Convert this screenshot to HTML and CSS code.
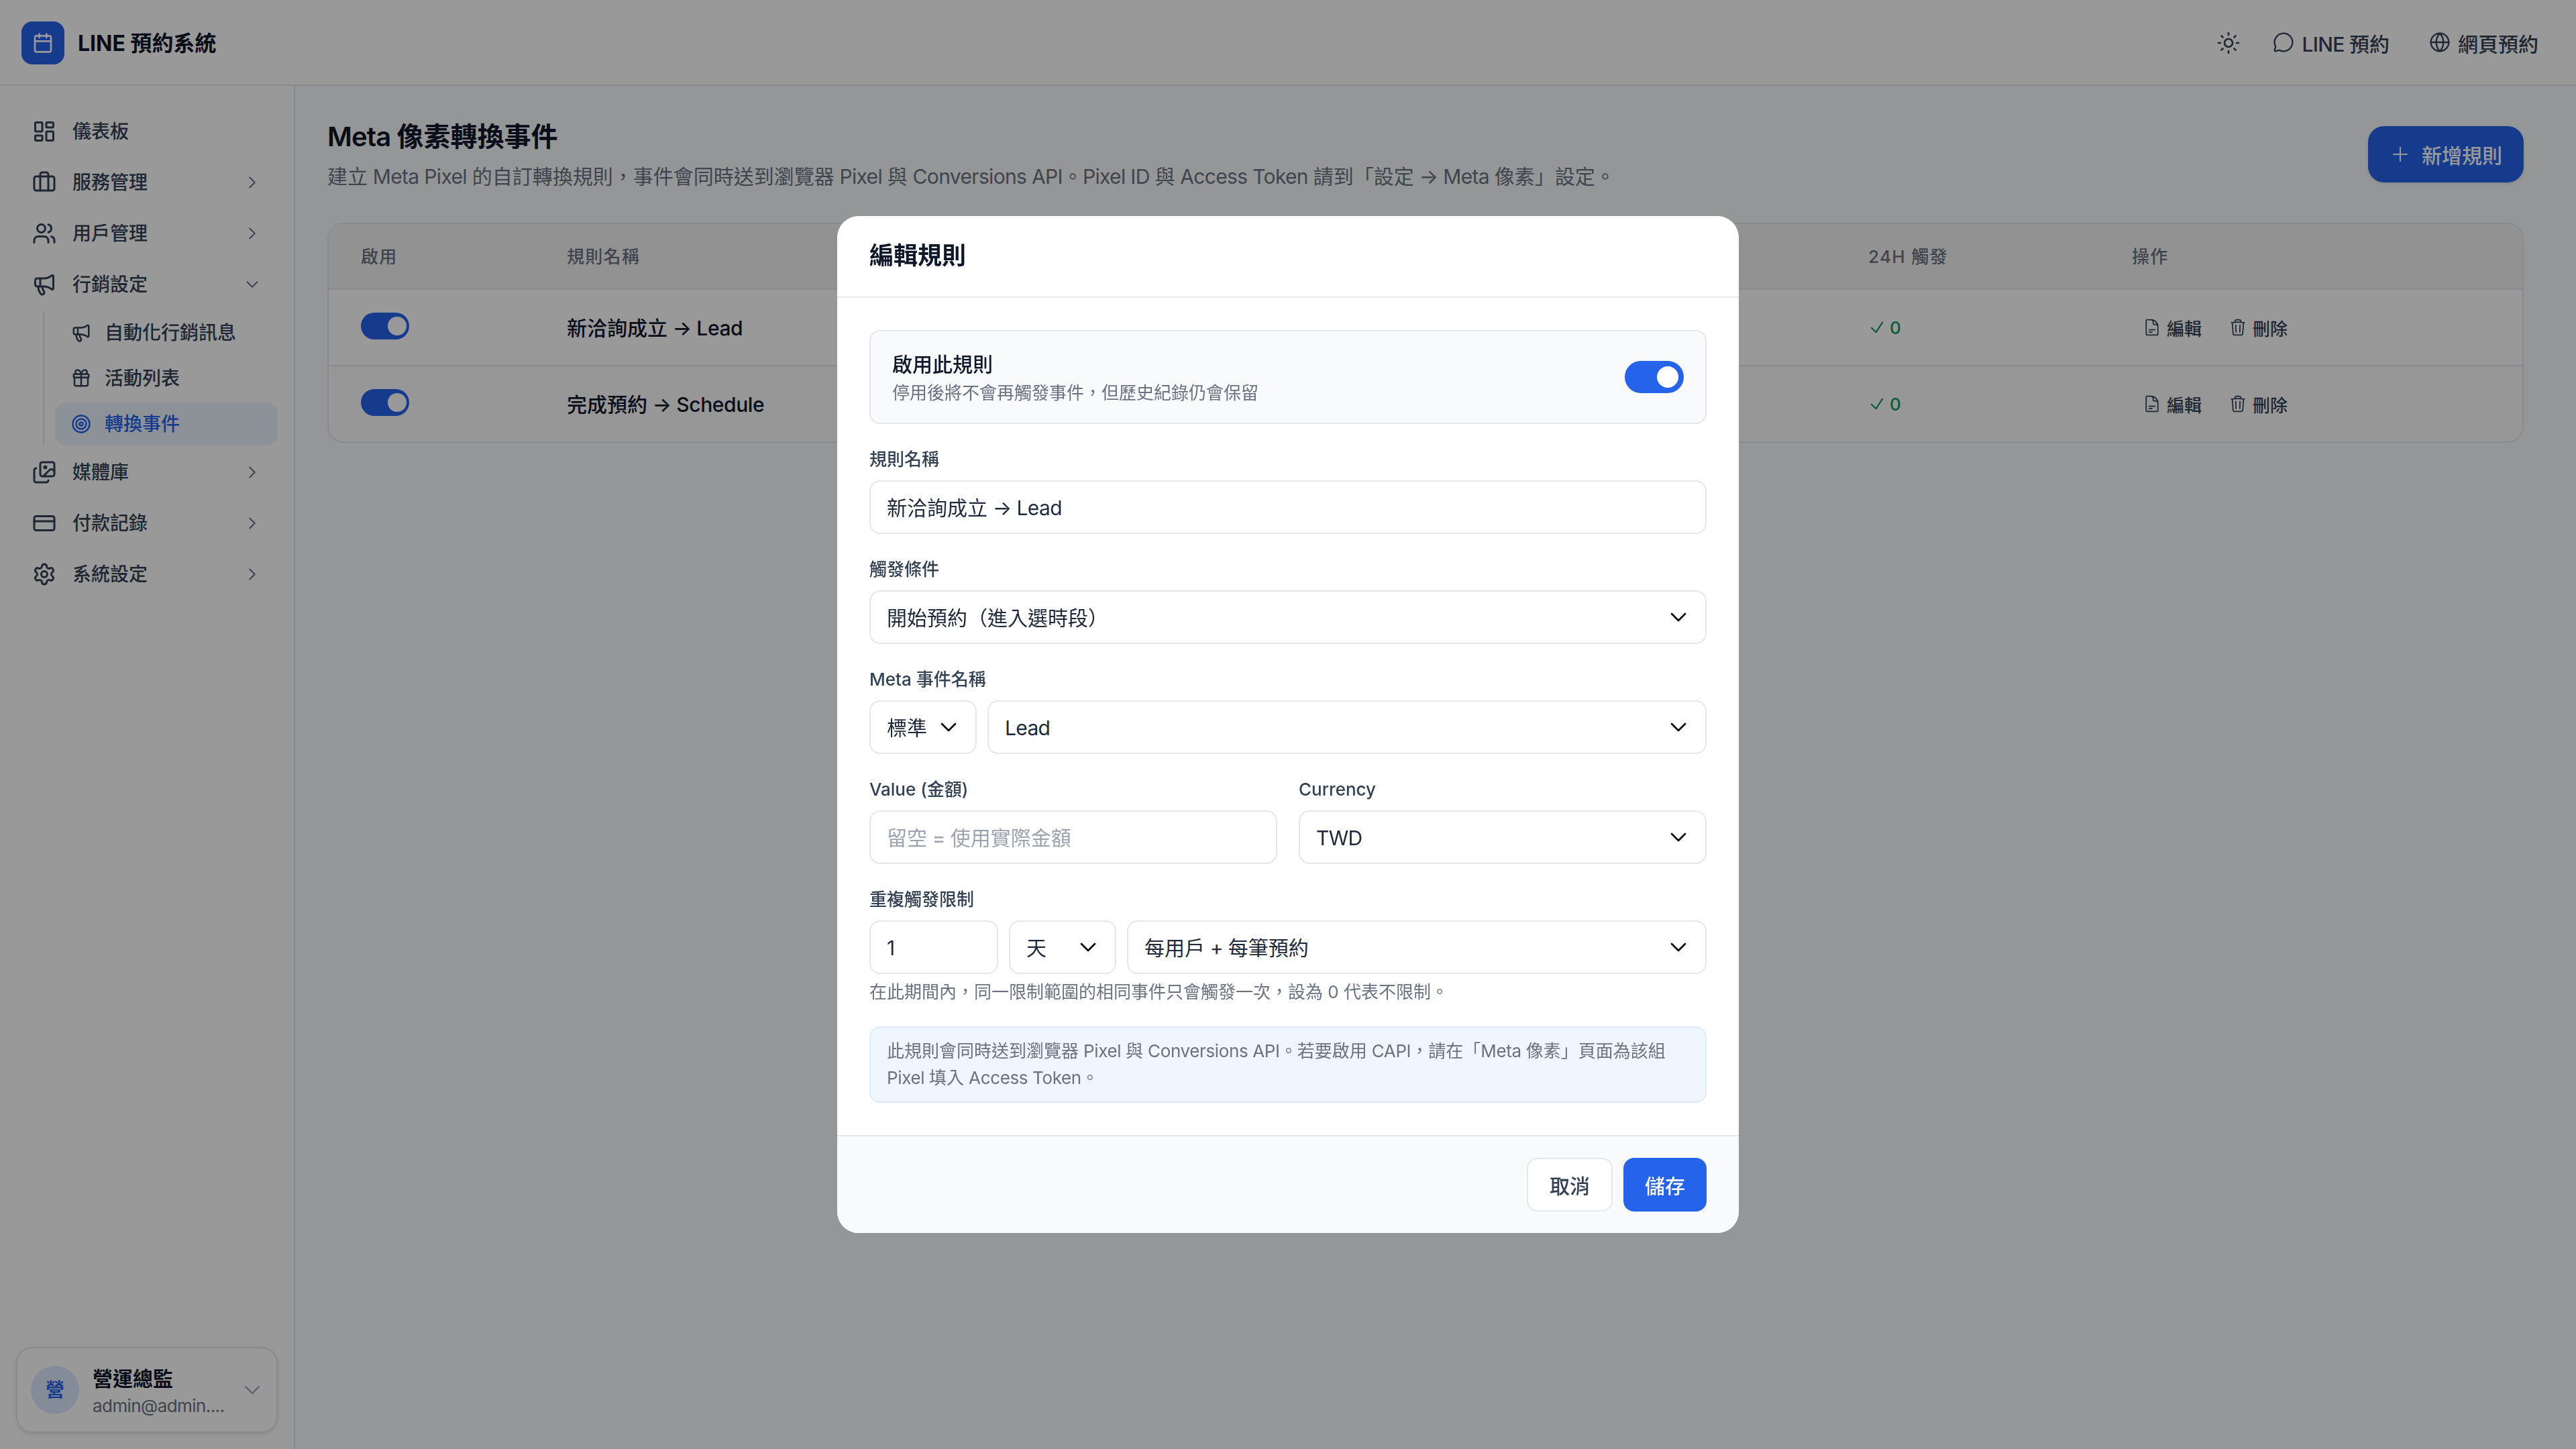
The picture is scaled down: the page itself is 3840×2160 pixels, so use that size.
FILE: index.html
```html
<!DOCTYPE html>
<html lang="zh-Hant">
<head>
    <meta charset="UTF-8">
    <meta name="viewport" content="width=device-width, initial-scale=1.0">
    <title>LINE 預約系統</title>
    <link rel="stylesheet" href="styles.css">
</head>
<body>
    <!-- Iconos compartidos -->
    <svg class="sprite" aria-hidden="true">
        <symbol id="i-right" viewBox="0 0 24 24"><path d="m8.25 4.5 7.5 7.5-7.5 7.5"/></symbol>
        <symbol id="i-down" viewBox="0 0 24 24"><path d="m19.5 8.25-7.5 7.5-7.5-7.5"/></symbol>
        <symbol id="i-check" viewBox="0 0 24 24"><path d="m4.5 12.75 6 6 9-13.5"/></symbol>
        <symbol id="i-megaphone" viewBox="0 0 24 24"><path d="M11 6a13 13 0 0 0 8.4-2.8A1 1 0 0 1 21 4v12a1 1 0 0 1-1.6.8A13 13 0 0 0 11 14H5a2 2 0 0 1-2-2V8a2 2 0 0 1 2-2z"/><path d="M6 14a12 12 0 0 0 2.4 7.2 2 2 0 0 0 3.2-2.4A8 8 0 0 1 10 14"/><path d="M8 6v8"/></symbol>
        <symbol id="i-doc" viewBox="0 0 24 24"><path d="M19.5 14.25v-2.625a3.375 3.375 0 0 0-3.375-3.375h-1.5A1.125 1.125 0 0 1 13.5 7.125v-1.5a3.375 3.375 0 0 0-3.375-3.375H8.25m0 12.75h7.5m-7.5 3H12M10.5 2.25H5.625c-.621 0-1.125.504-1.125 1.125v17.25c0 .621.504 1.125 1.125 1.125h12.75c.621 0 1.125-.504 1.125-1.125V11.25a9 9 0 0 0-9-9Z"/></symbol>
        <symbol id="i-trash" viewBox="0 0 24 24"><path d="m14.74 9-.346 9m-4.788 0L9.26 9m9.968-3.21c.342.052.682.107 1.022.166m-1.022-.165L18.16 19.673a2.25 2.25 0 0 1-2.244 2.077H8.084a2.25 2.25 0 0 1-2.244-2.077L4.772 5.79m14.456 0a48.108 48.108 0 0 0-3.478-.397m-12 .562c.34-.059.68-.114 1.022-.165m0 0a48.11 48.11 0 0 1 3.478-.397m7.5 0v-.916c0-1.18-.91-2.164-2.09-2.201a51.964 51.964 0 0 0-3.32 0c-1.18.037-2.09 1.022-2.09 2.201v.916m7.5 0a48.667 48.667 0 0 0-7.5 0"/></symbol>
    </svg>

    <div class="app">
        <header class="topbar">
            <div class="logo">
                <svg class="icon icon-32" viewBox="0 0 24 24"><path d="M8 2v4"/><path d="M16 2v4"/><rect width="18" height="18" x="3" y="4" rx="2"/><path d="M3 10h18"/></svg>
            </div>
            <h1 class="brand">LINE 預約系統</h1>
            <nav class="top-links">
                <button class="top-btn theme-btn">
                    <svg class="icon icon-36" viewBox="0 0 24 24"><circle cx="12" cy="12" r="4"/><path d="M12 2v2"/><path d="M12 20v2"/><path d="m4.93 4.93 1.41 1.41"/><path d="m17.66 17.66 1.41 1.41"/><path d="M2 12h2"/><path d="M20 12h2"/><path d="m6.34 17.66-1.41 1.41"/><path d="m19.07 4.93-1.41 1.41"/></svg>
                </button>
                <button class="top-btn line-btn">
                    <svg class="icon icon-32" viewBox="0 0 24 24"><path d="M2.992 16.342a2 2 0 0 1 .094 1.167l-1.065 3.29a1 1 0 0 0 1.236 1.168l3.413-.998a2 2 0 0 1 1.099.092 10 10 0 1 0-4.777-4.719"/></svg>
                    <span><span class="en">LINE </span>預約</span>
                </button>
                <button class="top-btn web-btn">
                    <svg class="icon icon-32" viewBox="0 0 24 24"><circle cx="12" cy="12" r="10"/><path d="M12 2a14.5 14.5 0 0 0 0 20 14.5 14.5 0 0 0 0-20"/><path d="M2 12h20"/></svg>
                    <span>網頁預約</span>
                </button>
            </nav>
        </header>

        <aside class="sidebar">
            <nav class="menu">
                <a class="menu-item">
                    <svg class="icon icon-36" viewBox="0 0 24 24"><rect width="7" height="9" x="3" y="3" rx="1"/><rect width="7" height="5" x="14" y="3" rx="1"/><rect width="7" height="9" x="14" y="12" rx="1"/><rect width="7" height="5" x="3" y="16" rx="1"/></svg>
                    <span>儀表板</span>
                </a>
                <a class="menu-item">
                    <svg class="icon icon-36" viewBox="0 0 24 24"><path d="M16 20V4a2 2 0 0 0-2-2h-4a2 2 0 0 0-2 2v16"/><rect width="20" height="14" x="2" y="6" rx="2"/></svg>
                    <span>服務管理</span>
                    <svg class="icon chevron"><use href="#i-right"/></svg>
                </a>
                <a class="menu-item">
                    <svg class="icon icon-36" viewBox="0 0 24 24"><path d="M16 21v-2a4 4 0 0 0-4-4H6a4 4 0 0 0-4 4v2"/><path d="M16 3.128a4 4 0 0 1 0 7.744"/><path d="M22 21v-2a4 4 0 0 0-3-3.87"/><circle cx="9" cy="7" r="4"/></svg>
                    <span>用戶管理</span>
                    <svg class="icon chevron"><use href="#i-right"/></svg>
                </a>
                <a class="menu-item">
                    <svg class="icon icon-36"><use href="#i-megaphone"/></svg>
                    <span>行銷設定</span>
                    <svg class="icon chevron"><use href="#i-down"/></svg>
                </a>
                <div class="submenu">
                    <a class="sub-item">
                        <svg class="icon icon-30"><use href="#i-megaphone"/></svg>
                        <span>自動化行銷訊息</span>
                    </a>
                    <a class="sub-item">
                        <svg class="icon icon-30" viewBox="0 0 24 24"><path d="M12 7v14"/><path d="M20 11v8a2 2 0 0 1-2 2H6a2 2 0 0 1-2-2v-8"/><path d="M7.5 7a1 1 0 0 1 0-5A4.8 8 0 0 1 12 7a4.8 8 0 0 1 4.5-5 1 1 0 0 1 0 5"/><rect x="3" y="7" width="18" height="4" rx="1"/></svg>
                        <span>活動列表</span>
                    </a>
                    <a class="sub-item active">
                        <svg class="icon icon-30" viewBox="0 0 24 24"><circle cx="12" cy="12" r="10"/><circle cx="12" cy="12" r="6"/><circle cx="12" cy="12" r="2"/></svg>
                        <span>轉換事件</span>
                    </a>
                </div>
                <a class="menu-item">
                    <svg class="icon icon-36" viewBox="0 0 24 24"><path d="m22 11-1.296-1.296a2.4 2.4 0 0 0-3.408 0L11 16"/><path d="M4 8a2 2 0 0 0-2 2v10a2 2 0 0 0 2 2h10a2 2 0 0 0 2-2"/><circle cx="13" cy="7" r="1" fill="currentColor"/><rect x="8" y="2" width="14" height="14" rx="2"/></svg>
                    <span>媒體庫</span>
                    <svg class="icon chevron"><use href="#i-right"/></svg>
                </a>
                <a class="menu-item">
                    <svg class="icon icon-36" viewBox="0 0 24 24"><rect width="20" height="14" x="2" y="5" rx="2"/><path d="M2 10h20"/></svg>
                    <span>付款記錄</span>
                    <svg class="icon chevron"><use href="#i-right"/></svg>
                </a>
                <a class="menu-item">
                    <svg class="icon icon-36" viewBox="0 0 24 24"><path d="M9.671 4.136a2.34 2.34 0 0 1 4.659 0 2.34 2.34 0 0 0 3.319 1.915 2.34 2.34 0 0 1 2.33 4.033 2.34 2.34 0 0 0 0 3.831 2.34 2.34 0 0 1-2.33 4.033 2.34 2.34 0 0 0-3.319 1.915 2.34 2.34 0 0 1-4.659 0 2.34 2.34 0 0 0-3.32-1.915 2.34 2.34 0 0 1-2.33-4.033 2.34 2.34 0 0 0 0-3.831A2.34 2.34 0 0 1 6.35 6.051a2.34 2.34 0 0 0 3.319-1.915"/><circle cx="12" cy="12" r="3"/></svg>
                    <span>系統設定</span>
                    <svg class="icon chevron"><use href="#i-right"/></svg>
                </a>
            </nav>
            <div class="user-card">
                <div class="avatar">營</div>
                <div class="user-info">
                    <div class="user-name">營運總監</div>
                    <div class="user-mail en">admin@admin....</div>
                </div>
                <svg class="icon user-chevron"><use href="#i-down"/></svg>
            </div>
        </aside>

        <main class="content">
            <div class="page-head">
                <div>
                    <h2 class="page-title"><span class="en">Meta </span>像素轉換事件</h2>
                    <p class="page-desc">建立<span class="en"> Meta Pixel </span>的自訂轉換規則，事件會同時送到瀏覽器<span class="en"> Pixel </span>與<span class="en"> Conversions API</span>。<span class="en">Pixel ID </span>與<span class="en"> Access Token </span>請到「設定<span class="en"> → Meta </span>像素」設定。</p>
                </div>
                <button class="add-btn">
                    <svg class="icon icon-32" viewBox="0 0 24 24"><path d="M12 4.5v15m7.5-7.5h-15"/></svg>
                    <span>新增規則</span>
                </button>
            </div>

            <div class="table">
                <div class="row row-head">
                    <div>啟用</div>
                    <div>規則名稱</div>
                    <div>24H 觸發</div>
                    <div>操作</div>
                </div>
                <div class="row">
                    <div><span class="switch"></span></div>
                    <div class="rule-name">新洽詢成立<span class="en"> → Lead</span></div>
                    <div class="count"><svg class="icon"><use href="#i-check"/></svg>0</div>
                    <div class="actions">
                        <button class="act-btn"><svg class="icon"><use href="#i-doc"/></svg>編輯</button>
                        <button class="act-btn"><svg class="icon"><use href="#i-trash"/></svg>刪除</button>
                    </div>
                </div>
                <div class="row">
                    <div><span class="switch"></span></div>
                    <div class="rule-name">完成預約<span class="en"> → Schedule</span></div>
                    <div class="count"><svg class="icon"><use href="#i-check"/></svg>0</div>
                    <div class="actions">
                        <button class="act-btn"><svg class="icon"><use href="#i-doc"/></svg>編輯</button>
                        <button class="act-btn"><svg class="icon"><use href="#i-trash"/></svg>刪除</button>
                    </div>
                </div>
            </div>
        </main>
    </div>

    <div class="overlay">
        <div class="modal">
            <div class="modal-head">編輯規則</div>
            <div class="modal-body">
                <div class="enable-card">
                    <div>
                        <div class="enable-title">啟用此規則</div>
                        <div class="enable-desc">停用後將不會再觸發事件，但歷史紀錄仍會保留</div>
                    </div>
                    <span class="switch switch-lg"></span>
                </div>

                <div class="field">
                    <label>規則名稱</label>
                    <div class="control"><span>新洽詢成立<span class="en"> → Lead</span></span></div>
                </div>

                <div class="field">
                    <label>觸發條件</label>
                    <div class="control select"><span>開始預約（進入選時段）</span><svg class="icon"><use href="#i-down"/></svg></div>
                </div>

                <div class="field">
                    <label>Meta 事件名稱</label>
                    <div class="inline">
                        <div class="control select w-160"><span>標準</span><svg class="icon"><use href="#i-down"/></svg></div>
                        <div class="control select grow"><span class="en">Lead</span><svg class="icon"><use href="#i-down"/></svg></div>
                    </div>
                </div>

                <div class="two-cols">
                    <div class="field">
                        <label>Value (金額)</label>
                        <div class="control placeholder"><span>留空<span class="en"> = </span>使用實際金額</span></div>
                    </div>
                    <div class="field">
                        <label>Currency</label>
                        <div class="control select"><span class="en">TWD</span><svg class="icon"><use href="#i-down"/></svg></div>
                    </div>
                </div>

                <div class="field">
                    <label>重複觸發限制</label>
                    <div class="inline">
                        <div class="control w-192"><span>1</span></div>
                        <div class="control select w-160"><span>天</span><svg class="icon"><use href="#i-down"/></svg></div>
                        <div class="control select grow"><span>每用戶<span class="en"> + </span>每筆預約</span><svg class="icon"><use href="#i-down"/></svg></div>
                    </div>
                    <p class="help">在此期間內，同一限制範圍的相同事件只會觸發一次，設為 0 代表不限制。</p>
                </div>

                <div class="notice">此規則會同時送到瀏覽器<span class="en"> Pixel </span>與<span class="en"> Conversions API</span>。若要啟用<span class="en"> CAPI</span>，請在「<span class="en">Meta </span>像素」頁面為該組<span class="en"> Pixel </span>填入<span class="en"> Access Token</span>。</div>
            </div>
            <div class="modal-foot">
                <button class="btn btn-cancel">取消</button>
                <button class="btn btn-save">儲存</button>
            </div>
        </div>
    </div>
</body>
</html>
```
FILE: styles.css
```css
* {
    box-sizing: border-box;
}

body {
    margin: 0;
    font-family: Inter, 'Noto Sans CJK TC', sans-serif;
    font-size: 30px;
    line-height: 1.5;
    color: #0f172a;
    background-color: #f8fafc;
}

h1, h2, p {
    margin: 0;
}

button {
    font-family: inherit;
    border: none;
    background: none;
    padding: 0;
    white-space: nowrap;
}

/* Texto latino un poco más cerrado */
.en {
    letter-spacing: -0.022em;
}

.sprite {
    display: none;
}

.icon {
    flex: none;
    fill: none;
    stroke: currentColor;
    stroke-width: 2;
    stroke-linecap: round;
    stroke-linejoin: round;
}

.icon-30 {
    width: 30px;
    height: 30px;
}

.icon-32 {
    width: 32px;
    height: 32px;
}

.icon-36 {
    width: 36px;
    height: 36px;
}

.app {
    display: grid;
    grid-template-columns: 440px 1fr;
    grid-template-rows: 128px 1fr;
    height: 100vh;
}

/* Barra superior */
.topbar {
    grid-column: 1 / 3;
    display: flex;
    align-items: center;
    padding: 2px 32px 0;
    border-bottom: 2px solid #e5e7eb;
    background-color: #fff;
}

.logo {
    width: 64px;
    height: 64px;
    display: flex;
    align-items: center;
    justify-content: center;
    border-radius: 16px;
    background-color: #2563eb;
    color: #fff;
}

.brand {
    margin-left: 20px;
    padding-top: 2px;
    font-size: 32px;
    font-weight: 700;
}

.top-links {
    margin-left: auto;
    display: flex;
    align-items: center;
    color: #334155;
}

.top-btn {
    display: flex;
    align-items: center;
    gap: 11px;
    padding: 0 24px;
    font-size: 30px;
    font-weight: 500;
    color: #334155;
}

.top-btn .icon {
    stroke-width: 1.75;
}

.top-btn .icon-32 {
    margin-bottom: 2px;
}

.line-btn {
    margin-right: 11px;
}

/* Menú lateral */
.sidebar {
    display: flex;
    flex-direction: column;
    justify-content: space-between;
    padding: 32px 24px 24px;
    border-right: 2px solid #e5e7eb;
    background-color: #fff;
}

.menu {
    display: flex;
    flex-direction: column;
    gap: 4px;
    font-size: 28px;
    font-weight: 500;
    color: #334155;
}

.menu-item {
    display: flex;
    align-items: center;
    gap: 24px;
    height: 72px;
    padding: 0 26px 0 24px;
}

.chevron {
    width: 24px;
    height: 24px;
    margin-left: auto;
    color: #64748b;
}

.submenu {
    display: flex;
    flex-direction: column;
    gap: 4px;
    margin-left: 40px;
    padding-left: 16px;
    border-left: 2px solid #e5e7eb;
}

.sub-item {
    display: flex;
    align-items: center;
    gap: 20px;
    height: 64px;
    padding-left: 24px;
    border-radius: 16px;
}

.sub-item.active {
    color: #2563eb;
    background-color: #e9f4fc;
}

.user-card {
    display: flex;
    align-items: center;
    height: 128px;
    padding: 0 20px;
    border: 2px solid #e5e7eb;
    border-radius: 24px;
    box-shadow: 0 2px 6px rgba(0, 0, 0, 0.1);
}

.avatar {
    width: 72px;
    height: 72px;
    display: flex;
    align-items: center;
    justify-content: center;
    border-radius: 50%;
    background-color: #dbeafe;
    color: #2563eb;
    font-size: 28px;
    font-weight: 600;
}

.user-info {
    margin-left: 20px;
    padding-top: 3px;
}

.user-name {
    font-weight: 600;
    line-height: 44px;
}

.user-mail {
    font-size: 26px;
    line-height: 38px;
    color: #6b7280;
}

.user-chevron {
    width: 32px;
    height: 32px;
    margin-left: auto;
    color: #94a3b8;
    stroke-width: 1.75;
}

/* Contenido */
.content {
    padding: 46px 78px 0 48px;
}

.page-head {
    display: flex;
    justify-content: space-between;
    height: 158px;
}

.page-title {
    font-size: 40px;
    font-weight: 600;
    line-height: 60px;
}

.page-desc {
    line-height: 58px;
    color: #6b7280;
}

.add-btn {
    display: flex;
    align-items: center;
    gap: 16px;
    height: 84px;
    margin-top: 14px;
    padding: 0 32px;
    border-radius: 24px;
    background-color: #2563eb;
    color: #fff;
    font-size: 30px;
    font-weight: 500;
    box-shadow: 0 2px 4px rgba(0, 0, 0, 0.1);
}

.add-btn .icon {
    stroke-width: 1.5;
}

.table {
    border: 2px solid #e5e7eb;
    border-radius: 24px;
    overflow: hidden;
    background-color: #fff;
}

.row {
    display: grid;
    grid-template-columns: 307px 1940px 393px 1fr;
    align-items: center;
    height: 114px;
    border-bottom: 2px solid #e5e7eb;
}

.row:last-child {
    height: 112px;
    border-bottom: none;
    background-color: #fcfcfc;
}

.row > div {
    padding-left: 48px;
}

.row-head {
    height: 98px;
    background-color: #f3f4f6;
    color: #6b7280;
    font-size: 26px;
    font-weight: 500;
    letter-spacing: 1.3px;
}

.row .rule-name {
    padding-top: 2px;
    font-weight: 500;
}

.rule-name .en {
    letter-spacing: -0.014em;
}

.count {
    display: flex;
    align-items: center;
    gap: 6px;
    font-size: 26px;
    font-weight: 500;
    color: #009966;
}

.count .icon {
    width: 26px;
    height: 26px;
}

.actions {
    display: flex;
    gap: 8px;
}

.act-btn {
    display: flex;
    align-items: center;
    gap: 8px;
    padding: 0 16px;
    font-size: 26px;
    font-weight: 500;
    color: #334155;
}

.act-btn .icon {
    width: 28px;
    height: 28px;
    stroke-width: 1.5;
}

.switch {
    display: flex;
    justify-content: flex-end;
    align-items: center;
    width: 72px;
    height: 40px;
    margin-bottom: 4px;
    padding-right: 4px;
    border-radius: 20px;
    background-color: #2563eb;
}

.switch::after {
    content: '';
    width: 28px;
    height: 28px;
    border-radius: 50%;
    background-color: #fff;
}

.switch-lg {
    width: 88px;
    height: 48px;
    margin: 0;
    padding-right: 8px;
    border-radius: 24px;
}

.switch-lg::after {
    width: 32px;
    height: 32px;
}

/* Modal */
.overlay {
    position: fixed;
    inset: 0;
    display: flex;
    align-items: center;
    justify-content: center;
    background-color: rgba(0, 0, 0, 0.4);
}

.modal {
    width: 1344px;
    border-radius: 32px;
    overflow: hidden;
    background-color: #fff;
}

.modal-head {
    height: 122px;
    padding: 0 48px;
    border-bottom: 2px solid #e5e7eb;
    font-size: 36px;
    font-weight: 600;
    line-height: 118px;
}

.modal-body {
    display: flex;
    flex-direction: column;
    gap: 32px;
    padding: 48px;
}

.enable-card {
    display: flex;
    align-items: center;
    justify-content: space-between;
    height: 140px;
    padding: 0 32px;
    border: 2px solid #e5e7eb;
    border-radius: 16px;
    background-color: #f8fafc;
}

.enable-title {
    padding-top: 2px;
    font-weight: 500;
    line-height: 46px;
}

.enable-desc {
    font-size: 26px;
    line-height: 40px;
    color: #6b7280;
}

.field label {
    display: block;
    padding-top: 1px;
    margin-bottom: 11px;
    font-size: 26px;
    font-weight: 500;
    line-height: 40px;
    color: #334155;
}

.control {
    display: flex;
    align-items: center;
    height: 80px;
    padding: 0 24px;
    border: 2px solid #e5e7eb;
    border-radius: 16px;
    background-color: #fff;
    color: #1e293b;
}

.control > span {
    padding-top: 2px;
}

.placeholder {
    color: #9ca3af;
}

.select {
    justify-content: space-between;
}

.select .icon {
    width: 32px;
    height: 32px;
    color: #000;
}

.inline {
    display: flex;
    gap: 16px;
}

.grow {
    flex: 1;
}

.w-160 {
    width: 160px;
}

.w-192 {
    width: 192px;
}

.two-cols {
    display: grid;
    grid-template-columns: 1fr 1fr;
    gap: 32px;
}

.help {
    margin-top: 8px;
    font-size: 26px;
    line-height: 38px;
    color: #6b7280;
}

.notice {
    height: 114px;
    padding: 15px 24px;
    border: 2px solid #dbeafe;
    border-radius: 16px;
    background-color: #eff6ff;
    font-size: 26px;
    line-height: 40px;
    color: #6b7280;
}

.notice .en {
    letter-spacing: -0.014em;
}

.modal-foot {
    display: flex;
    justify-content: flex-end;
    gap: 16px;
    height: 146px;
    padding: 32px 48px;
    border-top: 2px solid #e5e7eb;
    background-color: #f8fafc;
}

.btn {
    height: 80px;
    border-radius: 16px;
    font-size: 30px;
    font-weight: 500;
}

.btn-cancel {
    width: 128px;
    border: 2px solid #e5e7eb;
    background-color: #fff;
    color: #334155;
}

.btn-save {
    width: 124px;
    background-color: #2563eb;
    color: #fff;
}
```
